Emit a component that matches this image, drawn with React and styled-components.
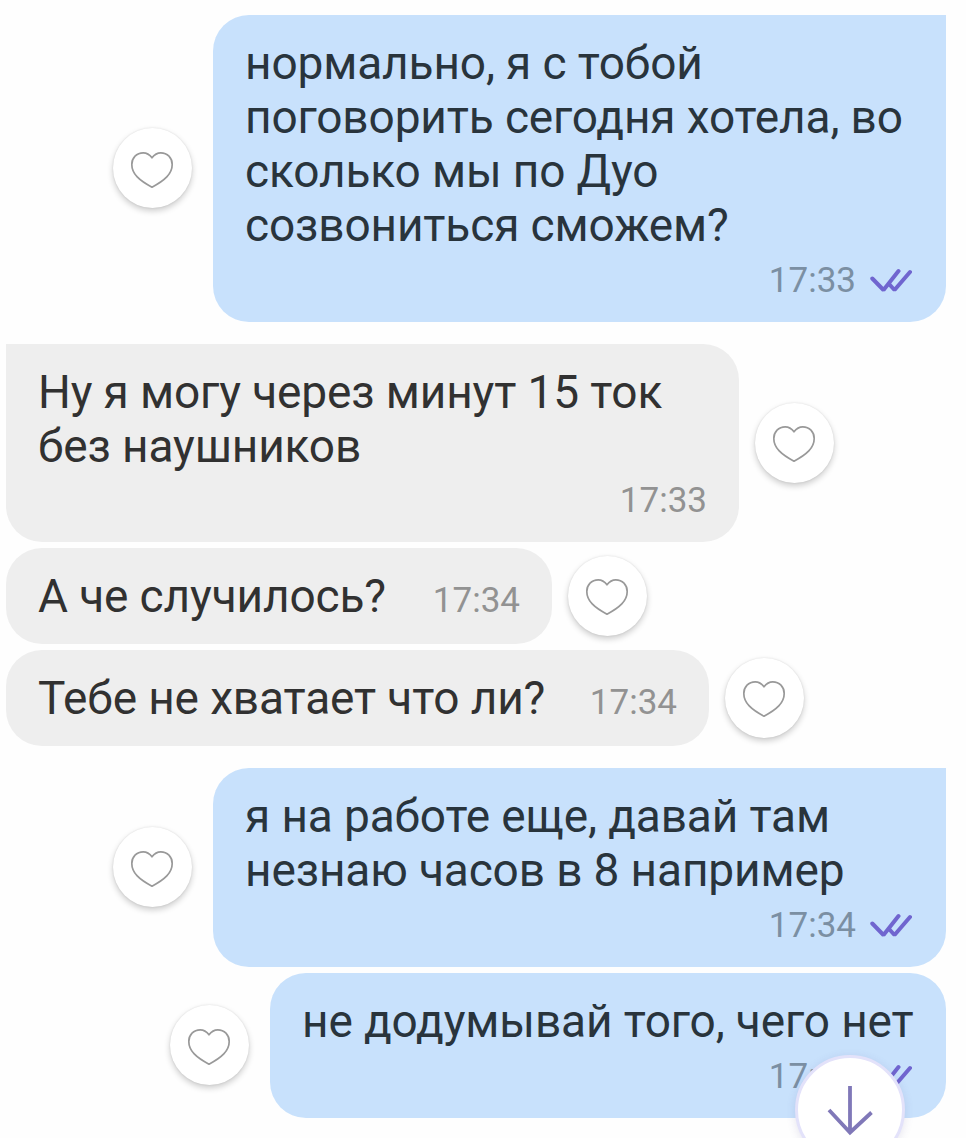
import React from 'react';
import styled, { createGlobalStyle } from 'styled-components';

const GlobalStyle = createGlobalStyle`
  body {
    margin: 0;
    background: #fefefe;
    font-family: Roboto, 'Liberation Sans', sans-serif;
  }
`;

const Chat = styled.main`
  position: relative;
  box-sizing: border-box;
  width: 966px;
  height: 1138px;
  padding: 14.5px 20px 0 6px;
  overflow: hidden;
`;

const Group = styled.section`
  display: flex;
  flex-direction: column;
  gap: 6px;
  margin-bottom: 22.5px;
`;

const Row = styled.div`
  display: flex;
  align-items: center;
  flex-direction: ${p => (p.$mine ? 'row-reverse' : 'row')};
  gap: ${p => (p.$mine ? '21px' : '16px')};
`;

const Bubble = styled.div`
  box-sizing: border-box;
  display: flex;
  flex-direction: ${p => (p.$inline ? 'row' : 'column')};
  justify-content: space-between;
  align-items: ${p => (p.$inline ? 'baseline' : 'stretch')};
  width: ${p => p.$width}px;
  height: ${p => p.$height}px;
  padding: 21px 32px 21px;
  border-radius: 36px;
  border-top-left-radius: ${p => (p.$first && !p.$mine ? '0' : '36px')};
  border-top-right-radius: ${p => (p.$first && p.$mine ? '0' : '36px')};
  background: ${p => (p.$mine ? '#c8e1fc' : '#eeeeee')};
  color: ${p => (p.$mine ? '#29343c' : '#313131')};
`;

const Text = styled.p`
  margin: 0;
  font-size: 46px;
  line-height: 54px;
  letter-spacing: -0.13px;
  white-space: pre;
`;

const Meta = styled.div`
  display: flex;
  justify-content: flex-end;
  align-items: center;
  gap: 13.5px;
  padding-right: ${p => (p.$mine ? '2.5px' : '0')};
  font-size: 35px;
  line-height: 41px;
  color: ${p => (p.$mine ? '#7b8fa3' : '#929292')};
`;

const LikeButton = styled.button`
  display: flex;
  align-items: center;
  justify-content: center;
  flex: none;
  width: 79px;
  height: 80px;
  padding: 3px 1px 0 0;
  border: 0;
  border-radius: 50%;
  background: #fff;
  box-shadow: 0 3px 6px rgba(0, 0, 0, 0.2), 0 0 2px rgba(0, 0, 0, 0.1);
`;

const ScrollDown = styled.button`
  position: absolute;
  top: 1055px;
  left: 795px;
  box-sizing: border-box;
  width: 110px;
  height: 110px;
  padding: 0;
  border: 3px solid #e3e2fa;
  border-radius: 50%;
  background: #fff;
  box-shadow: 0 2px 10px rgba(80, 70, 140, 0.14);

  svg {
    display: block;
  }
`;

const Heart = () => (
  <svg width="44" height="40" viewBox="0 0 44 40" fill="none" stroke="#999" strokeWidth="1.7" strokeLinejoin="round">
    <path d="M22 7.8C19.5 4.4 16.5 2.8 13.2 2.8C6.6 2.8 1.8 8 1.8 14.5C1.8 24 9.5 30.5 22 37.2C34.5 30.5 42.2 24 42.2 14.5C42.2 8 37.4 2.8 30.8 2.8C27.5 2.8 24.5 4.4 22 7.8Z" />
  </svg>
);

const Ticks = () => (
  <svg width="42" height="26" viewBox="0 0 42 26" fill="none" stroke="#7065cf" strokeWidth="4" strokeLinecap="round" strokeLinejoin="bevel">
    <path d="M2.3 11.5L13.5 23L28.5 4M19.5 17.5L24.5 23L40 5" />
  </svg>
);

const groups = [
  {
    mine: true,
    messages: [
      {
        lines: ['нормально, я с тобой', 'поговорить сегодня хотела, во', 'сколько мы по Дуо', 'созвониться сможем?'],
        time: '17:33',
        width: 733,
        height: 307,
      },
    ],
  },
  {
    mine: false,
    messages: [
      { lines: ['Ну я могу через минут 15 ток', 'без наушников'], time: '17:33', width: 733, height: 197.5 },
      { lines: ['А че случилось?'], time: '17:34', width: 546, height: 96, inline: true },
      { lines: ['Тебе не хватает что ли?'], time: '17:34', width: 703, height: 96, inline: true },
    ],
  },
  {
    mine: true,
    messages: [
      { lines: ['я на работе еще, давай там', 'незнаю часов в 8 например'], time: '17:34', width: 733, height: 198.5 },
      { lines: ['не додумывай того, чего нет'], time: '17:34', width: 676, height: 145 },
    ],
  },
];

const Message = ({ message, mine, first }) => (
  <Row $mine={mine}>
    <Bubble $mine={mine} $first={first} $inline={message.inline} $width={message.width} $height={message.height}>
      <Text>{message.lines.join('\n')}</Text>
      <Meta $mine={mine}>
        <span>{message.time}</span>
        {mine && <Ticks />}
      </Meta>
    </Bubble>
    <LikeButton type="button" aria-label="Нравится">
      <Heart />
    </LikeButton>
  </Row>
);

const App = () => (
  <Chat>
    <GlobalStyle />
    {groups.map((group, i) => (
      <Group key={i}>
        {group.messages.map((message, j) => (
          <Message key={message.lines[0]} message={message} mine={group.mine} first={j === 0} />
        ))}
      </Group>
    ))}
    <ScrollDown type="button" aria-label="Вниз">
      <svg width="104" height="104" viewBox="0 0 104 104" fill="none" stroke="#8078b8" strokeWidth="3.8">
        <path d="M52 28V74M31 52L52 74.5L73.5 54.5" />
      </svg>
    </ScrollDown>
  </Chat>
);

export default App;
